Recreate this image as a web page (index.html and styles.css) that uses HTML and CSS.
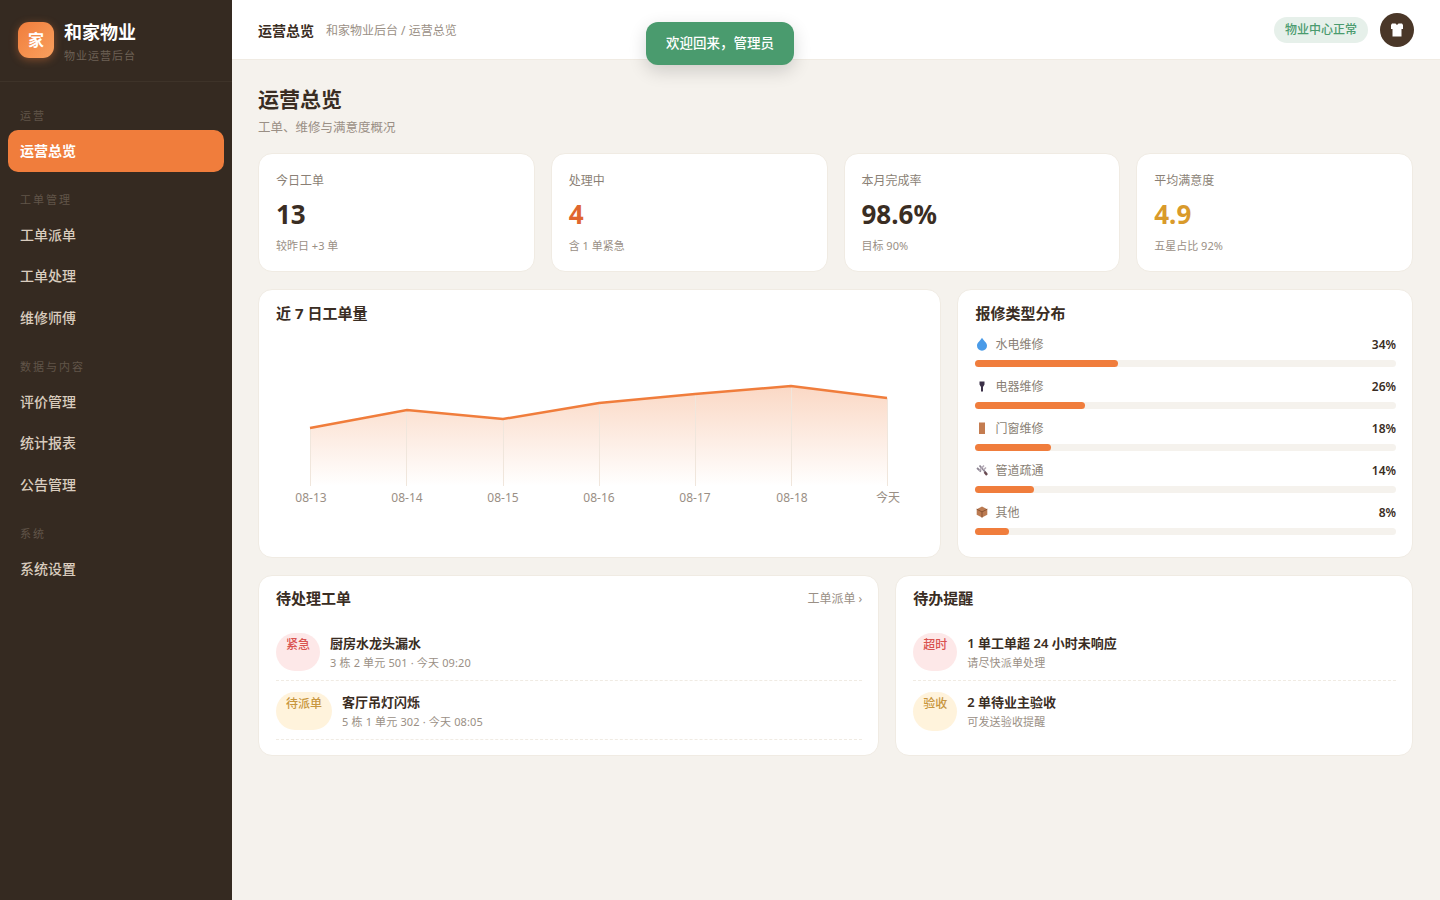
FILE: index.html
```html
<!DOCTYPE html>
<html lang="zh">
<head>
    <meta charset="UTF-8">
    <title>和家物业 - 运营总览</title>
    <link rel="stylesheet" href="styles.css">
</head>
<body>
<div class="app">
    <aside class="sidebar">
        <div class="brand">
            <div class="brand-icon">家</div>
            <div class="brand-text">
                <div class="brand-name">和家物业</div>
                <div class="brand-sub">物业运营后台</div>
            </div>
        </div>
        <nav class="nav">
            <div class="nav-label">运营</div>
            <a class="nav-item active">运营总览</a>
            <div class="nav-label">工单管理</div>
            <a class="nav-item">工单派单</a>
            <a class="nav-item">工单处理</a>
            <a class="nav-item">维修师傅</a>
            <div class="nav-label">数据与内容</div>
            <a class="nav-item">评价管理</a>
            <a class="nav-item">统计报表</a>
            <a class="nav-item">公告管理</a>
            <div class="nav-label">系统</div>
            <a class="nav-item">系统设置</a>
        </nav>
    </aside>

    <div class="main">
        <header class="topbar">
            <div class="crumbs">
                <span class="crumb-title">运营总览</span>
                <span class="crumb-path">和家物业后台 / 运营总览</span>
            </div>
            <div class="topbar-right">
                <span class="status-pill">物业中心正常</span>
                <div class="avatar">
                    <svg width="16" height="16" viewBox="0 0 16 16"><path d="M3 1.500h3.500L8 3l1.500-1.500H13l1 1.500v4h-1.500V14.500h-9V7H2V3z" fill="#fff"/></svg>
                </div>
            </div>
        </header>

        <div class="toast">欢迎回来，管理员</div>

        <main class="content">
            <h1 class="page-title">运营总览</h1>
            <p class="page-sub">工单、维修与满意度概况</p>

            <section class="stats">
                <div class="card stat">
                    <div class="stat-label">今日工单</div>
                    <div class="stat-value">13</div>
                    <div class="stat-note">较昨日 +3 单</div>
                </div>
                <div class="card stat">
                    <div class="stat-label">处理中</div>
                    <div class="stat-value orange">4</div>
                    <div class="stat-note">含 1 单紧急</div>
                </div>
                <div class="card stat">
                    <div class="stat-label">本月完成率</div>
                    <div class="stat-value">98.6%</div>
                    <div class="stat-note">目标 90%</div>
                </div>
                <div class="card stat">
                    <div class="stat-label">平均满意度</div>
                    <div class="stat-value gold">4.9</div>
                    <div class="stat-note">五星占比 92%</div>
                </div>
            </section>

            <section class="row-chart">
                <div class="card">
                    <h2 class="card-title">近 7 日工单量</h2>
                    <svg class="line-chart" width="640" height="180" viewBox="276 330 640 180">
                        <defs>
                            <linearGradient id="area" x1="0" y1="0" x2="0" y2="1">
                                <stop offset="0" stop-color="#f07d3c" stop-opacity="0.3"/>
                                <stop offset="1" stop-color="#f07d3c" stop-opacity="0"/>
                            </linearGradient>
                        </defs>
                        <polygon points="310,428 407,410 503,419 599,403 695,394 791,386 887,398 887,486 310,486" fill="url(#area)"/>
                        <g stroke="#f0e6dc" stroke-width="1">
                            <line x1="310.500" y1="428" x2="310.500" y2="486"/>
                            <line x1="406.500" y1="410" x2="406.500" y2="486"/>
                            <line x1="503.500" y1="419" x2="503.500" y2="486"/>
                            <line x1="599.500" y1="403" x2="599.500" y2="486"/>
                            <line x1="695.500" y1="394" x2="695.500" y2="486"/>
                            <line x1="791.500" y1="386" x2="791.500" y2="486"/>
                            <line x1="887.500" y1="398" x2="887.500" y2="486"/>
                        </g>
                        <polyline points="310,428 407,410 503,419 599,403 695,394 791,386 887,398" fill="none" stroke="#f07d3c" stroke-width="2.500"/>
                        <g class="axis" text-anchor="middle">
                            <text x="311" y="502">08-13</text>
                            <text x="407" y="502">08-14</text>
                            <text x="503" y="502">08-15</text>
                            <text x="599" y="502">08-16</text>
                            <text x="695" y="502">08-17</text>
                            <text x="792" y="502">08-18</text>
                            <text x="888" y="502">今天</text>
                        </g>
                    </svg>
                </div>

                <div class="card">
                    <h2 class="card-title">报修类型分布</h2>
                    <div class="dist">
                        <div class="dist-row">
                            <div class="dist-head">
                                <svg class="dist-icon" width="14" height="14" viewBox="0 0 14 14"><path d="M7 .8C8.500 3.500 12 5.800 12 8.700A5 5 0 0 1 2 8.700C2 5.800 5.500 3.500 7 .8z" fill="#4a9be8"/></svg>
                                <span class="dist-name">水电维修</span>
                                <span class="dist-pct">34%</span>
                            </div>
                            <div class="track"><div class="fill" style="width:34%"></div></div>
                        </div>
                        <div class="dist-row">
                            <div class="dist-head">
                                <svg class="dist-icon" width="14" height="14" viewBox="0 0 14 14"><path d="M4.500 2.500h5v3L8 8v4.500H6V8L4.500 5.500z" fill="#3b3048"/></svg>
                                <span class="dist-name">电器维修</span>
                                <span class="dist-pct">26%</span>
                            </div>
                            <div class="track"><div class="fill" style="width:26%"></div></div>
                        </div>
                        <div class="dist-row">
                            <div class="dist-head">
                                <svg class="dist-icon" width="14" height="14" viewBox="0 0 14 14"><rect x="4" y="1.500" width="6" height="11.500" fill="#c47c50"/></svg>
                                <span class="dist-name">门窗维修</span>
                                <span class="dist-pct">18%</span>
                            </div>
                            <div class="track"><div class="fill" style="width:18%"></div></div>
                        </div>
                        <div class="dist-row">
                            <div class="dist-head">
                                <svg class="dist-icon" width="14" height="14" viewBox="0 0 14 14"><path d="M2 5l4 3.500M4.500 2.500L12 11" stroke="#8d8592" stroke-width="1.800" fill="none"/><path d="M9 2.500L4 8M11 4.500L8.500 7" stroke="#b3a9b5" stroke-width="1.500" fill="none"/><path d="M9.500 9l2.500 3" stroke="#6a4a50" stroke-width="2.200"/></svg>
                                <span class="dist-name">管道疏通</span>
                                <span class="dist-pct">14%</span>
                            </div>
                            <div class="track"><div class="fill" style="width:14%"></div></div>
                        </div>
                        <div class="dist-row">
                            <div class="dist-head">
                                <svg class="dist-icon" width="14" height="14" viewBox="0 0 14 14"><path d="M7 1.500l5.300 2.700v5.600L7 12.500 1.700 9.800V4.200z" fill="#bb7b52"/><path d="M1.700 4.200L7 6.900l5.300-2.700" fill="none" stroke="#8a5433"/><path d="M7 6.900v5.600" stroke="#8a5433"/></svg>
                                <span class="dist-name">其他</span>
                                <span class="dist-pct">8%</span>
                            </div>
                            <div class="track"><div class="fill" style="width:8%"></div></div>
                        </div>
                    </div>
                </div>
            </section>

            <section class="row-lists">
                <div class="card">
                    <div class="card-head">
                        <h2 class="card-title">待处理工单</h2>
                        <a class="card-link">工单派单 ›</a>
                    </div>
                    <div class="todo">
                        <span class="tag tag-red">紧急</span>
                        <div>
                            <div class="todo-title">厨房水龙头漏水</div>
                            <div class="todo-sub">3 栋 2 单元 501 · 今天 09:20</div>
                        </div>
                    </div>
                    <div class="todo">
                        <span class="tag tag-yellow">待派单</span>
                        <div>
                            <div class="todo-title">客厅吊灯闪烁</div>
                            <div class="todo-sub">5 栋 1 单元 302 · 今天 08:05</div>
                        </div>
                    </div>
                </div>

                <div class="card">
                    <div class="card-head">
                        <h2 class="card-title">待办提醒</h2>
                    </div>
                    <div class="todo">
                        <span class="tag tag-red">超时</span>
                        <div>
                            <div class="todo-title">1 单工单超 24 小时未响应</div>
                            <div class="todo-sub">请尽快派单处理</div>
                        </div>
                    </div>
                    <div class="todo no-line">
                        <span class="tag tag-yellow">验收</span>
                        <div>
                            <div class="todo-title">2 单待业主验收</div>
                            <div class="todo-sub">可发送验收提醒</div>
                        </div>
                    </div>
                </div>
            </section>
        </main>
    </div>
</div>
</body>
</html>
```

FILE: styles.css
```css
* {
    box-sizing: border-box;
}

body {
    margin: 0;
    background: #f5f2ed;
    color: #3a2d23;
    font-family: "Noto Sans", "Noto Sans CJK SC", sans-serif;
}

.app {
    display: flex;
    min-height: 900px;
}

/* sidebar */
.sidebar {
    width: 232px;
    flex-shrink: 0;
    background: #352a21;
}

.brand {
    display: flex;
    align-items: center;
    gap: 10px;
    height: 82px;
    padding: 0 18px 2px;
    border-bottom: 1px solid #3e3329;
}

.brand-icon {
    width: 36px;
    height: 36px;
    border-radius: 11px;
    background: linear-gradient(135deg, #f07d3c, #f9a05e);
    box-shadow: 0 2px 8px rgba(240, 125, 60, 0.4);
    color: #fff;
    font-size: 16px;
    font-weight: 700;
    line-height: 36px;
    text-align: center;
}

.brand-text {
    padding-top: 5px;
}

.brand-name {
    color: #fff;
    font-size: 18px;
    font-weight: 700;
    line-height: 22px;
}

.brand-sub {
    margin-top: 5px;
    color: #6d6155;
    font-size: 11px;
    letter-spacing: 1px;
    line-height: 16px;
}

.nav {
    padding: 26px 8px 0;
}

.nav-label {
    height: 16px;
    margin: 20.5px 0 6px;
    padding-left: 12px;
    color: #615549;
    font-size: 11px;
    letter-spacing: 2px;
    line-height: 16px;
}

.nav-label:first-child {
    margin-top: 0;
}

.nav-item {
    display: flex;
    align-items: center;
    height: 41.5px;
    padding: 0 0 2px 12px;
    border-radius: 10px;
    color: #d9ccbe;
    font-size: 14px;
    font-weight: 500;
}

.nav-item.active {
    background: #f07d3c;
    color: #fff;
    font-weight: 600;
}

/* top bar */
.main {
    position: relative;
    flex: 1;
    min-width: 0;
}

.topbar {
    display: flex;
    align-items: center;
    justify-content: space-between;
    height: 60px;
    padding: 0 26px;
    background: #fff;
    border-bottom: 1px solid #f0ebe3;
}

.crumbs {
    display: flex;
    align-items: center;
    gap: 12px;
}

.crumb-title {
    font-size: 14px;
    font-weight: 600;
}

.crumb-path {
    color: #9a8f85;
    font-size: 12px;
}

.topbar-right {
    display: flex;
    align-items: center;
    gap: 12px;
}

.status-pill {
    padding: 0 11px;
    height: 26px;
    border-radius: 13px;
    background: #e6f0ea;
    color: #4a9b6e;
    font-size: 12px;
    font-weight: 500;
    line-height: 26px;
}

.avatar {
    display: flex;
    align-items: center;
    justify-content: center;
    width: 34px;
    height: 34px;
    border-radius: 50%;
    background: #4a3728;
}

.toast {
    position: absolute;
    top: 22px;
    left: 414px;
    width: 148px;
    height: 43px;
    border-radius: 12px;
    background: #4a9b6e;
    box-shadow: 0 6px 18px rgba(0, 0, 0, 0.16);
    color: #fff;
    font-size: 13.500px;
    font-weight: 500;
    line-height: 43px;
    text-align: center;
}

/* content */
.content {
    padding: 24px 27px 0 26px;
}

.page-title {
    margin: 0;
    font-size: 21px;
    font-weight: 700;
    line-height: 30px;
}

.page-sub {
    margin: 4px 0 15px;
    color: #9a8f85;
    font-size: 12.500px;
    line-height: 20px;
}

.card {
    padding: 12px 16px 0 17px;
    background: #fff;
    border: 1px solid #f0ebe3;
    border-radius: 14px;
}

.card-title {
    margin: 0;
    font-size: 15px;
    font-weight: 700;
    line-height: 22px;
}

.stats {
    display: grid;
    grid-template-columns: repeat(4, 1fr);
    gap: 16px;
}

.stat {
    height: 119px;
    padding-top: 17px;
}

.stat-label {
    color: #8a7f75;
    font-size: 12px;
    line-height: 20px;
}

.stat-value {
    margin-top: 5px;
    font-size: 26px;
    font-weight: 700;
    line-height: 36px;
}

.orange {
    color: #e0662f;
}

.gold {
    color: #d99a2b;
}

.stat-note {
    margin-top: 5px;
    color: #9a8f85;
    font-size: 11px;
    line-height: 18px;
}

.row-chart {
    display: grid;
    grid-template-columns: 1.5fr 1fr;
    gap: 16px;
    margin-top: 17px;
}

.row-chart .card {
    height: 269px;
}

.line-chart {
    display: block;
    margin-top: 6px;
}

.axis {
    fill: #9a8f85;
    font-size: 12px;
}

.dist {
    margin-top: 8px;
}

.dist-row {
    height: 42px;
}

.dist-head {
    display: flex;
    align-items: center;
    height: 24px;
    font-size: 12px;
}

.dist-icon {
    flex-shrink: 0;
    margin-right: 6px;
}

.dist-name {
    flex: 1;
    color: #8a7f75;
}

.dist-pct {
    font-weight: 600;
}

.track {
    height: 7px;
    margin-top: 4px;
    border-radius: 4px;
    background: #f5f2ed;
}

.fill {
    height: 7px;
    border-radius: 4px;
    background: #f07d3c;
}

.row-lists {
    display: grid;
    grid-template-columns: 1.2fr 1fr;
    gap: 16px;
    margin-top: 17px;
}

.row-lists .card {
    height: 181px;
}

.card-head {
    display: flex;
    align-items: center;
    justify-content: space-between;
    height: 22px;
    margin: -1px 0 13px;
}

.card-link {
    color: #9a8f85;
    font-size: 12px;
}

.todo {
    display: flex;
    gap: 10px;
    height: 59px;
    padding: 11px 0 9px;
    border-bottom: 1px dashed #f0ebe3;
}

.no-line {
    border-bottom: 0;
}

.tag {
    flex-shrink: 0;
    min-width: 44px;
    padding: 3px 10px;
    border-radius: 20px;
    font-size: 12px;
    font-weight: 500;
    line-height: 18px;
    text-align: center;
}

.tag-red {
    background: #fde8e8;
    color: #d9534f;
}

.tag-yellow {
    background: #fff3dc;
    color: #c8963e;
}

.todo-title {
    margin-bottom: 1px;
    font-size: 13px;
    font-weight: 600;
    line-height: 20px;
}

.todo-sub {
    color: #9a8f85;
    font-size: 11px;
    letter-spacing: 0.15px;
    line-height: 18px;
}
```
